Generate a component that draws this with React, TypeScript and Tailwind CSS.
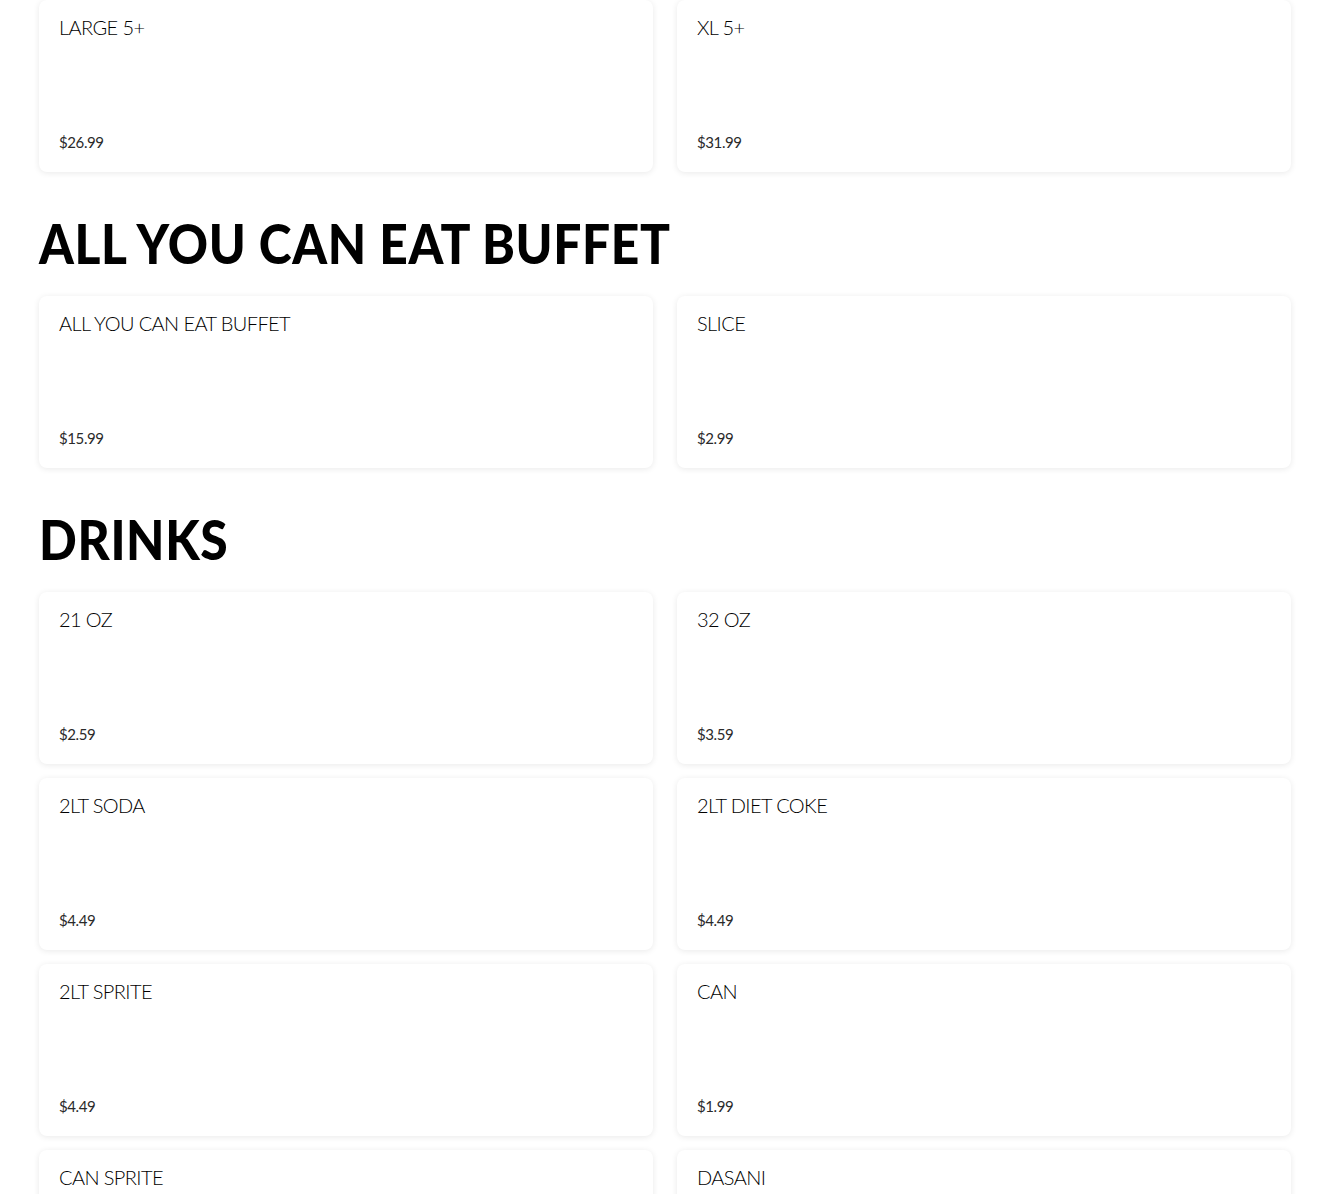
import React from "react";

type Item = { name: string; price: string };

const topItems: Item[] = [
  { name: "LARGE 5+", price: "$26.99" },
  { name: "XL 5+", price: "$31.99" },
];

const buffet: Item[] = [
  { name: "ALL YOU CAN EAT BUFFET", price: "$15.99" },
  { name: "SLICE", price: "$2.99" },
];

const drinks: Item[] = [
  { name: "21 OZ", price: "$2.59" },
  { name: "32 OZ", price: "$3.59" },
  { name: "2LT SODA", price: "$4.49" },
  { name: "2LT DIET COKE", price: "$4.49" },
  { name: "2LT SPRITE", price: "$4.49" },
  { name: "CAN", price: "$1.99" },
  { name: "CAN SPRITE", price: "$1.99" },
  { name: "DASANI", price: "$1.99" },
];

function Card({ item }: { item: Item }) {
  return (
    <div className="h-[172px] bg-white rounded-[8px] shadow-[0_1px_6px_rgba(0,0,0,0.09)] pl-[20px] pr-[20px] pt-[13px] pb-[20px] flex flex-col justify-between">
      <div className="text-[20px] leading-[28px] font-light text-black tracking-[-0.6px]">
        {item.name}
      </div>
      <div className="text-[15px] leading-[20px] font-normal text-[#2a2a2a] tracking-[-0.4px]">
        {item.price}
      </div>
    </div>
  );
}

function Grid({ items }: { items: Item[] }) {
  return (
    <div className="grid grid-cols-2 gap-x-[24px] gap-y-[14px]">
      {items.map((it) => (
        <Card key={it.name} item={it} />
      ))}
    </div>
  );
}

function Heading({ children }: { children: React.ReactNode }) {
  return (
    <h2 className="mt-[43px] mb-[25px] h-[56px]">
      <span className="inline-block origin-left scale-x-[0.888] whitespace-nowrap text-[56px] leading-[56px] font-black text-black tracking-[0.7px]">
        {children}
      </span>
    </h2>
  );
}

export default function App() {
  return (
    <div
      className="bg-white min-h-[1194px] px-[39px] overflow-hidden"
      style={{ fontFamily: "Lato, 'Noto Sans', sans-serif" }}
    >
      <Grid items={topItems} />
      <Heading>ALL YOU CAN EAT BUFFET</Heading>
      <Grid items={buffet} />
      <Heading>DRINKS</Heading>
      <Grid items={drinks} />
    </div>
  );
}
